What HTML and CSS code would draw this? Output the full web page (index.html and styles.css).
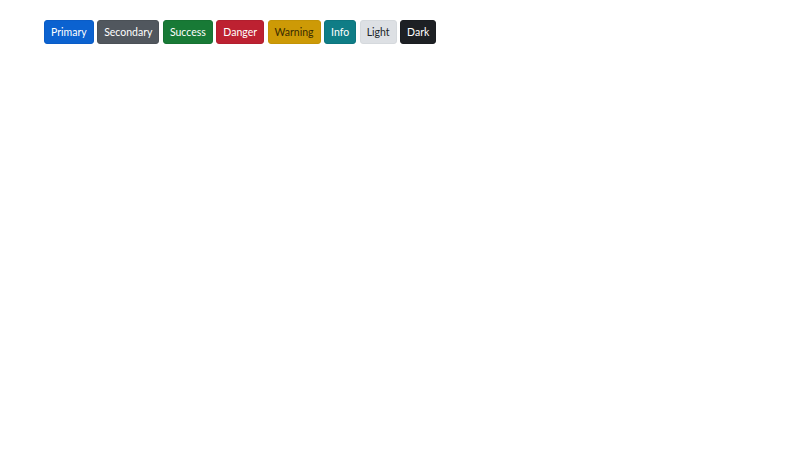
FILE: index.html
```html
<!DOCTYPE html>
<html>
<head>
<meta charset="utf-8">
<link rel="stylesheet" href="styles.css">
</head>
<body>
<div class="bar">
  <button class="btn primary">Primary</button>
  <button class="btn secondary">Secondary</button>
  <button class="btn success">Success</button>
  <button class="btn danger">Danger</button>
  <button class="btn warning">Warning</button>
  <button class="btn info">Info</button>
  <button class="btn light">Light</button>
  <button class="btn dark">Dark</button>
</div>
</body>
</html>
```
FILE: styles.css
```css
html, body { margin: 0; padding: 0; background: #fff; }
body { font-family: Lato, "Open Sans", sans-serif; }
.bar { display: flex; gap: 3.5px; padding: 20px 0 0 44px; }
.btn {
  font-family: inherit;
  font-size: 10.5px;
  height: 24px;
  padding: 0 6px;
  border: 1px solid transparent;
  border-radius: 3px;
  display: inline-flex;
  align-items: center;
  color: #fff;
  cursor: pointer;
}
.primary { background: #0b62d0; border-color: #0a5cc6; }
.secondary { background: #51575e; border-color: #4b5157; }
.success { background: #187a36; border-color: #167232; }
.danger { background: #bd2131; border-color: #b21f2e; }
.warning { background: #cd9a06; border-color: #c39306; color: #3a2c02; }
.info { background: #0f7d86; border-color: #0d757e; }
.light { background: #dde0e4; border-color: #d5d9dd; color: #212529; }
.dark { background: #1d2024; border-color: #1a1d21; }
```
